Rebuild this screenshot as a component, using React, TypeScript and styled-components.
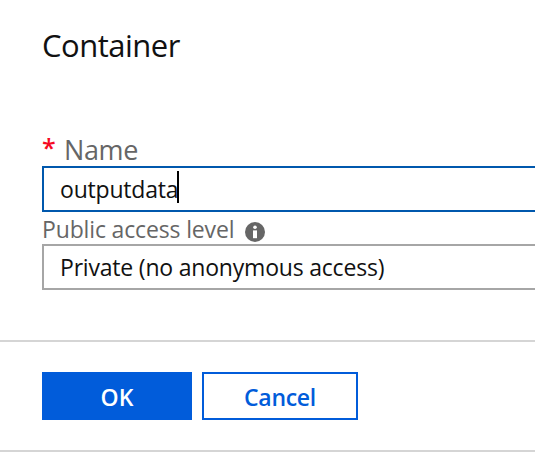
import React from "react";
import styled, { createGlobalStyle } from "styled-components";

const GlobalStyle = createGlobalStyle`
  * { box-sizing: border-box; }
  body { margin: 0; background: #fff; overflow: hidden; font-family: "Open Sans", "Noto Sans", sans-serif; }
`;

const Panel = styled.main`
  width: 535px;
  height: 452px;
  display: flex;
  flex-direction: column;
  background: #fff;
  overflow: hidden;
`;

const Title = styled.h1`
  margin: 0;
  padding: 23px 0 0 42px;
  height: 134px;
  font-size: 31px;
  font-weight: 400;
  letter-spacing: -0.5px;
  line-height: 44px;
  color: #111;
`;

const Text = styled.span<{ $width: number }>`
  display: inline-block;
  white-space: nowrap;
  width: ${(p) => p.$width}px;
`;

const Form = styled.form`
  height: 206px;
  padding-left: 42px;
`;

const Label = styled.label<{ $large?: boolean }>`
  display: flex;
  align-items: center;
  height: 32px;
  padding-top: ${(p) => (p.$large ? 0 : 2)}px;
  font-size: ${(p) => (p.$large ? 27 : 23)}px;
  letter-spacing: ${(p) => (p.$large ? -0.4 : -0.15)}px;
  line-height: 30px;
  color: #666;
`;

const Required = styled.span`
  width: 22px;
  margin-top: -6px;
  font-size: 25px;
  font-weight: 600;
  color: #f50a23;
`;

const Field = styled.div<{ $active?: boolean }>`
  display: flex;
  align-items: center;
  height: 46px;
  width: 510px;
  padding-left: 16px;
  border: 2px solid ${(p) => (p.$active ? "#0058ad" : "#a6a6a6")};
  font-size: 23px;
  letter-spacing: -0.2px;
  color: #111;
`;

const Caret = styled.span`
  width: 2px;
  height: 32px;
  margin-top: -4px;
  background: #000;
`;

const Footer = styled.footer`
  display: flex;
  gap: 10px;
  height: 112px;
  padding: 30px 0 0 42px;
  border-top: 2px solid #d5d5d5;
  border-bottom: 2px solid #d5d5d5;
`;

const Button = styled.button<{ $primary?: boolean }>`
  width: ${(p) => (p.$primary ? 150 : 156)}px;
  height: 48px;
  padding: 2px 0 0;
  border: 2px solid #015cda;
  background: ${(p) => (p.$primary ? "#015cda" : "#fff")};
  color: ${(p) => (p.$primary ? "#fff" : "#015cda")};
  font: 600 23px "Open Sans", sans-serif;
  letter-spacing: ${(p) => (p.$primary ? 0 : -0.3)}px;
`;

const InfoIcon = styled.svg`
  flex: none;
  margin: 5px 0 0 11px;
`;

export default function App() {
  return (
    <Panel>
      <GlobalStyle />
      <Title>Container</Title>
      <Form>
        <Label $large><Required>*</Required>Name</Label>
        <Field $active><Text $width={117}>outputdata</Text><Caret /></Field>
        <Label>
          <Text $width={192}>Public access level</Text>
          <InfoIcon width="20" height="20" viewBox="0 0 20 20">
            <circle cx="10" cy="10" r="10" fill="#666" />
            <circle cx="10" cy="5.2" r="1.8" fill="#fff" />
            <path d="M8 8.4h4v7.8H8z" fill="#fff" />
          </InfoIcon>
        </Label>
        <Field>Private (no anonymous access)</Field>
      </Form>
      <Footer>
        <Button $primary type="button">OK</Button>
        <Button type="button">Cancel</Button>
      </Footer>
    </Panel>
  );
}
